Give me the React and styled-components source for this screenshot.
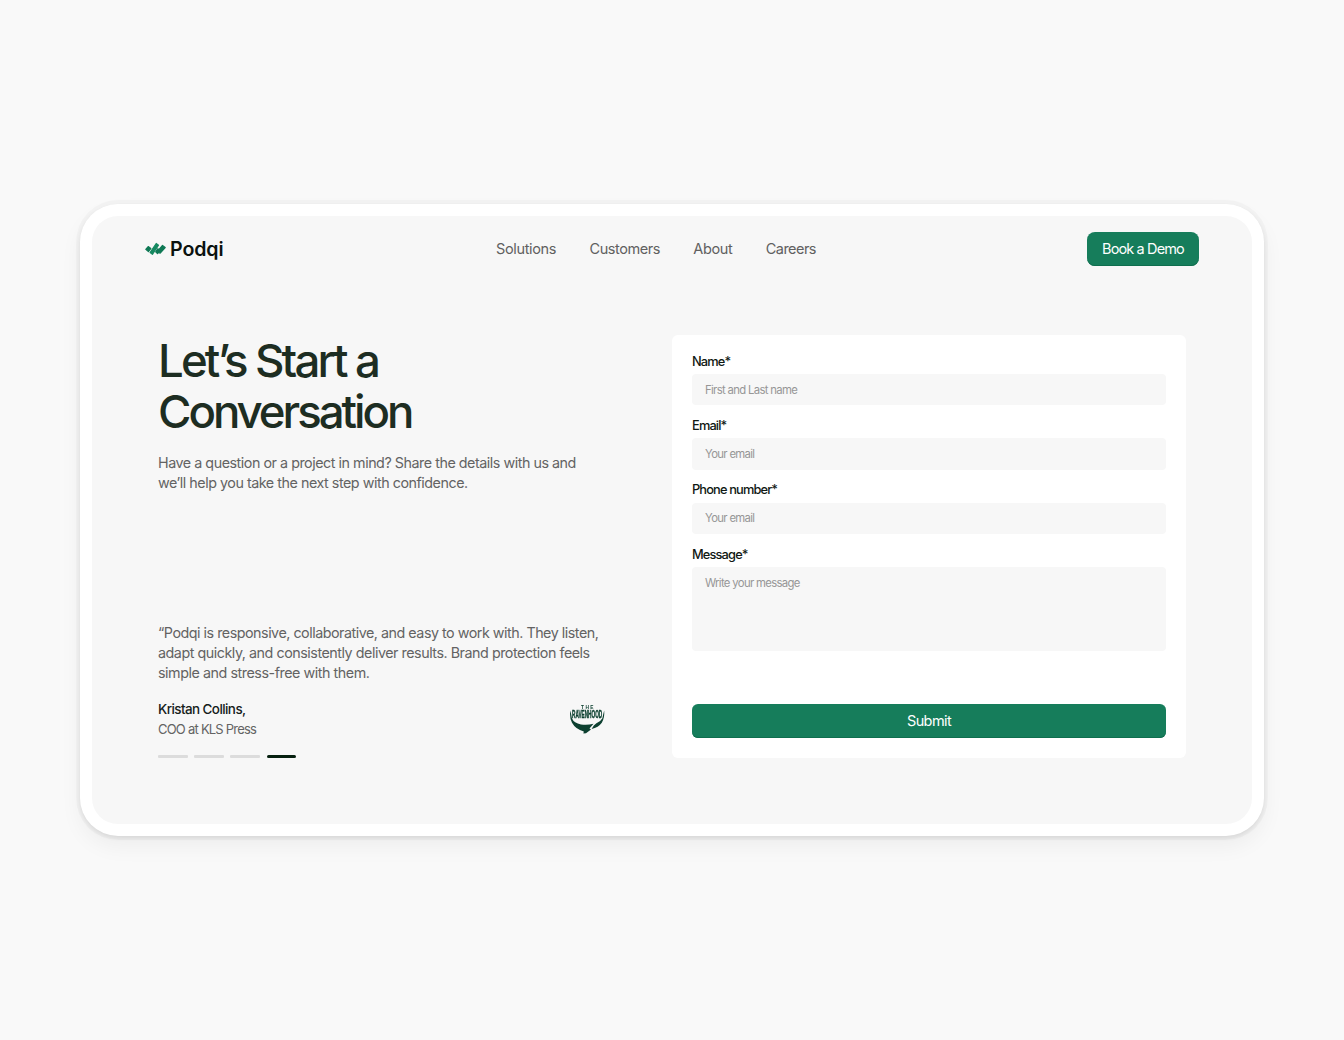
import React from "react";
import styled, { createGlobalStyle } from "styled-components";

const Global = createGlobalStyle`
  * { box-sizing: border-box; }
  body {
    margin: 0;
    background: #f9f9f9;
    font-family: Inter, "Liberation Sans", sans-serif;
  }
  h1, p { margin: 0; }
`;

const Stage = styled.div`
  min-height: 1040px;
  display: flex;
  align-items: center;
  justify-content: center;
`;

const Frame = styled.div`
  width: 1184px;
  height: 632px;
  padding: 12px;
  border-radius: 38px;
  background: #fff;
  box-shadow: 0 0 0 4px rgba(0, 0, 0, 0.025), 0 2px 4px rgba(0, 0, 0, 0.07), 0 10px 22px rgba(0, 0, 0, 0.05);
`;

const Page = styled.div`
  height: 100%;
  border-radius: 26px;
  background: #f7f7f7;
  display: flex;
  flex-direction: column;
`;

const Header = styled.header`
  display: grid;
  grid-template-columns: 351px 1fr auto;
  align-items: center;
  height: 34px;
  margin: 16px 53px 0;
`;

const Brand = styled.div`
  display: flex;
  align-items: center;
  gap: 4px;
  color: #0b120e;
  font: 600 19.6px/24px Inter, sans-serif;
`;

const BrandName = styled.span`
  letter-spacing: -0.1px;
`;

const Nav = styled.nav`
  display: flex;
  gap: 33.5px;
`;

const NavLink = styled.a`
  color: #606060;
  font-size: 14.5px;
  line-height: 20px;
  letter-spacing: ${(p) => p.$track};
`;

const Button = styled.button`
  display: flex;
  align-items: center;
  justify-content: center;
  width: ${(p) => p.$width};
  height: 34.4px;
  padding: 0 0 1px;
  border: 0;
  border-radius: ${(p) => p.$radius};
  background: #167d5b;
  box-shadow: inset 0 -1px 0 #0f6e4e;
  color: #fff;
  font: 400 14.5px/20px Inter, sans-serif;
  letter-spacing: ${(p) => p.$track};
`;

const Main = styled.main`
  display: flex;
  justify-content: space-between;
  height: 423px;
  margin: 69px 66px 0;
`;

const Intro = styled.section`
  display: flex;
  flex-direction: column;
  width: 447px;
`;

const Title = styled.h1`
  color: #1d2d22;
  font-size: 45.6px;
  line-height: 51px;
  font-weight: 530;
`;

const Line = styled.span`
  display: block;
  white-space: nowrap;
  letter-spacing: ${(p) => p.$track};
`;

const Copy = styled.p`
  margin-top: ${(p) => p.$top || "0"};
  color: #636363;
  font-size: 14.3px;
  line-height: 19.8px;
`;

const Testimonial = styled.div`
  margin-top: auto;
`;

const Attribution = styled.div`
  display: flex;
  align-items: center;
  justify-content: space-between;
  margin-top: 16.6px;
`;

const Author = styled.div`
  color: #14201a;
  font-size: 13.4px;
  line-height: 20px;
  font-weight: 500;
  letter-spacing: -0.55px;
`;

const Role = styled.div`
  color: #636363;
  font-size: 13px;
  line-height: 20px;
  letter-spacing: -0.85px;
  word-spacing: 0.3px;
`;

const Pager = styled.div`
  display: flex;
  gap: 6.4px;
  margin-top: 16px;
`;

const Dash = styled.span`
  width: 29.8px;
  height: 3px;
  border-radius: ${(p) => (p.$active ? "2px" : "1px")};
  background: ${(p) => (p.$active ? "#06200f" : "#dcdcdc")};
`;

const Form = styled.form`
  display: flex;
  flex-direction: column;
  gap: 10.85px;
  width: 514px;
  padding: 17px 20px 19.6px;
  border-radius: 6px;
  background: #fff;
`;

const Field = styled.label`
  display: flex;
  flex-direction: column;
  gap: 2.2px;
`;

const Label = styled.span`
  color: #101813;
  font-size: 12.8px;
  line-height: 20px;
  font-weight: 450;
  letter-spacing: -0.84px;
`;

const Control = styled.input`
  width: 100%;
  height: ${(p) => p.$height || "31.2px"};
  padding: ${(p) => p.$pad || "0 13px"};
  border: 0;
  border-radius: 4px;
  outline: 0;
  resize: none;
  background: #f7f7f7;
  font: 400 11.3px/16px Inter, sans-serif;
  letter-spacing: -0.66px;
  &::placeholder { color: #969696; opacity: 1; }
`;

const Submit = styled.div`
  margin-top: auto;
`;

const BrandMark = () => (
  <svg width="21" height="14" viewBox="0 0 21 14">
    <g strokeWidth="1.2" strokeLinejoin="round">
      <path d="M.8 7.3 3.2 4.6 5.8 6.6 3.4 9.5Z" fill="#0f7955" stroke="#0f7955" />
      <path d="M5.1 10.6 11.2 1.5 13.5 3.2 7.4 12.3Z" fill="#168961" stroke="#168961" />
      <path d="M10.7 9.8 12.7 6.9 14.1 7.3 17.5 3.5 20.2 5.5 15.2 11.1 13.5 10.5 12.5 11.5Z" fill="#0f7955" stroke="#0f7955" />
    </g>
  </svg>
);

const CrestDrawing = styled.svg`
  will-change: transform;
  overflow: visible;
  fill: #0d4030;
`;

const Ravenhood = () => (
  <CrestDrawing width="35" height="29" viewBox="0 0 35 29">
    <g fontFamily="Liberation Sans, sans-serif" fontWeight="700">
      <text x="11" y="4.3" fontSize="4.8" textLength="12.5">THE</text>
      <text transform="translate(2 13.4) scale(.5 1)" fontSize="10.8" textLength="60.4" lengthAdjust="spacingAndGlyphs" stroke="#0d4030" strokeWidth=".45">RAVENHOOD</text>
    </g>
    <path d="M.2 5.5 C1 8 1.4 10.5 1.9 13.2 Q4 18.2 11 19.4 Q17 20.4 23.5 18.8 L19.5 23.4 L21 24.6 L16 28.2 L13.4 28.6 L13.8 26.6 Q5.5 24.2 2 17.8 Q-.6 12.5 .2 5.5Z" />
    <path d="M34.2 5.5 C33.4 8 33 10.5 32.4 13.2 Q30.6 16.6 26.4 18.2 L23.8 20.4 L21.6 24 Q28.4 22.6 31.8 17.8 Q34.8 12.5 34.2 5.5Z" />
  </CrestDrawing>
);

const links = [
  ["Solutions", "-0.35px"],
  ["Customers", "-0.46px"],
  ["About", "-0.4px"],
  ["Careers", "-0.54px"],
];

const fields = [
  ["Name*", "First and Last name"],
  ["Email*", "Your email"],
  ["Phone number*", "Your email"],
];

export default function App() {
  return (
    <Stage>
      <Global />
      <Frame>
        <Page>
          <Header>
            <Brand><BrandMark /><BrandName>Podqi</BrandName></Brand>
            <Nav>
              {links.map(([name, track]) => <NavLink key={name} $track={track}>{name}</NavLink>)}
            </Nav>
            <Button $width="112px" $radius="8px" $track="-0.88px">Book a Demo</Button>
          </Header>
          <Main>
            <Intro>
              <Title><Line $track="-2.87px">Let’s Start a</Line><Line $track="-3.05px">Conversation</Line></Title>
              <Copy $top="16px">
                <Line $track="-0.465px">Have a question or a project in mind? Share the details with us and</Line>
                <Line $track="-0.465px">we’ll help you take the next step with confidence.</Line>
              </Copy>
              <Testimonial>
                <Copy>
                  <Line $track="-0.48px">“Podqi is responsive, collaborative, and easy to work with. They listen,</Line>
                  <Line $track="-0.465px">adapt quickly, and consistently deliver results. Brand protection feels</Line>
                  <Line $track="-0.45px">simple and stress-free with them.</Line>
                </Copy>
                <Attribution>
                  <div>
                    <Author>Kristan Collins,</Author>
                    <Role>COO at KLS Press</Role>
                  </div>
                  <Ravenhood />
                </Attribution>
                <Pager><Dash /><Dash /><Dash /><Dash $active /></Pager>
              </Testimonial>
            </Intro>
            <Form>
              {fields.map(([label, hint]) => (
                <Field key={label}>
                  <Label>{label}</Label>
                  <Control placeholder={hint} />
                </Field>
              ))}
              <Field>
                <Label>Message*</Label>
                <Control as="textarea" $height="84px" $pad="8px 13px" placeholder="Write your message" />
              </Field>
              <Submit><Button type="button" $width="100%" $radius="6px" $track="-0.6px">Submit</Button></Submit>
            </Form>
          </Main>
        </Page>
      </Frame>
    </Stage>
  );
}
